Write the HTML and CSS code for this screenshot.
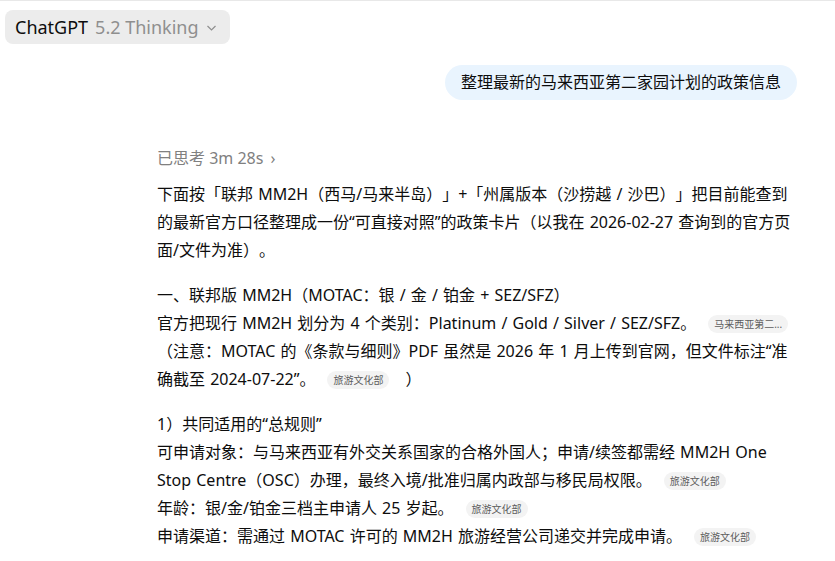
FILE: index.html
```html
<!doctype html>
<html lang="zh-CN">
<head>
	<meta charset="UTF-8">
	<title>ChatGPT</title>
	<link rel="stylesheet" href="styles.css">
</head>
<body>
	<div class="top">
		<div class="model">
			<span class="name">ChatGPT</span>
			<span class="ver">5.2 Thinking</span>
			<svg class="chev" width="11" height="10" viewBox="0 0 11 10"><path d="M1.5 3 L5.5 7 L9.5 3" fill="none" stroke="#8f8f8f" stroke-width="1.2"/></svg>
		</div>
	</div>

	<div class="user-row">
		<div class="bubble">整理最新的马来西亚第二家园计划的政策信息</div>
	</div>

	<div class="answer">
		<div class="thought">已思考 3m 28s <span class="arr">›</span></div>

		<p>下面按「联邦 MM2H（西马/马来半岛）」+「州属版本（沙捞越 / 沙巴）」把目前能查到的最新官方口径整理成一份“可直接对照”的政策卡片（以我在 2026-02-27 查询到的官方页面/文件为准）。</p>

		<p>一、联邦版 MM2H（MOTAC：银 / 金 / 铂金 + SEZ/SFZ）<br>
		官方把现行 MM2H 划分为 4 个类别：Platinum / Gold / Silver / SEZ/SFZ。<span class="cite">马来西亚第二...</span><br>（注意：MOTAC 的《条款与细则》PDF 虽然是 2026 年 1 月上传到官网，但文件标注“准确截至 2024-07-22”。<span class="cite">旅游文化部</span><span class="gap"></span>）</p>

		<p>1）共同适用的“总规则”<br>
		可申请对象：与马来西亚有外交关系国家的合格外国人；申请/续签都需经 MM2H One Stop Centre（OSC）办理，最终入境/批准归属内政部与移民局权限。<span class="cite">旅游文化部</span><br>
		年龄：银/金/铂金三档主申请人 25 岁起。<span class="cite">旅游文化部</span><br>
		申请渠道：需通过 MOTAC 许可的 MM2H 旅游经营公司递交并完成申请。<span class="cite">旅游文化部</span></p>
	</div>
</body>
</html>
```

FILE: styles.css
```css
*{
	margin: 0;
	padding: 0;
	box-sizing: border-box;
}
body{
	width: 835px;
	height: 561px;
	overflow: hidden;
	background: #fff;
	color: #0d0d0d;
	font-family: "Segoe UI", "Noto Sans", "Noto Sans CJK SC", sans-serif;
	text-spacing-trim: space-all;
	border-top: 1px solid #e8e8e8;
}
.top{
	padding: 9px 5px 0;
	display: flex;
}
.model{
	height: 34px;
	display: flex;
	align-items: center;
	gap: 7px;
	padding: 0 13px 0 10px;
	background: #ececec;
	border-radius: 8px;
	font-size: 18px;
}
.model .name{
	color: #0d0d0d;
}
.model .ver{
	color: #8f8f8f;
}
.chev{
	margin-top: 2px;
}
.user-row{
	display: flex;
	justify-content: flex-end;
	padding-right: 38px;
	margin-top: 21px;
}
.bubble{
	background: #e9f4fe;
	border-radius: 18px;
	padding: 5px 16px 6px;
	font-size: 16px;
	line-height: 24px;
	color: #0d0d0d;
}
.answer{
	width: 640px;
	margin-left: 157px;
	margin-top: 47px;
	font-size: 16px;
	line-height: 28px;
}
.thought{
	font-size: 16px;
	color: #808080;
	line-height: 22px;
	margin-bottom: 11px;
}
.thought .arr{
	margin-left: 3px;
}
.answer p{
	margin-bottom: 17px;
	word-spacing: 1px;
}
.cite{
	display: inline-block;
	vertical-align: 1px;
	height: 18px;
	line-height: 18px;
	padding: 0 6px;
	margin-left: 12px;
	border-radius: 9px;
	background: #f3f3f3;
	color: #5d5d5d;
	font-size: 10px;
	word-spacing: 0;
}
.gap{
	display: inline-block;
	width: 16px;
}
```
